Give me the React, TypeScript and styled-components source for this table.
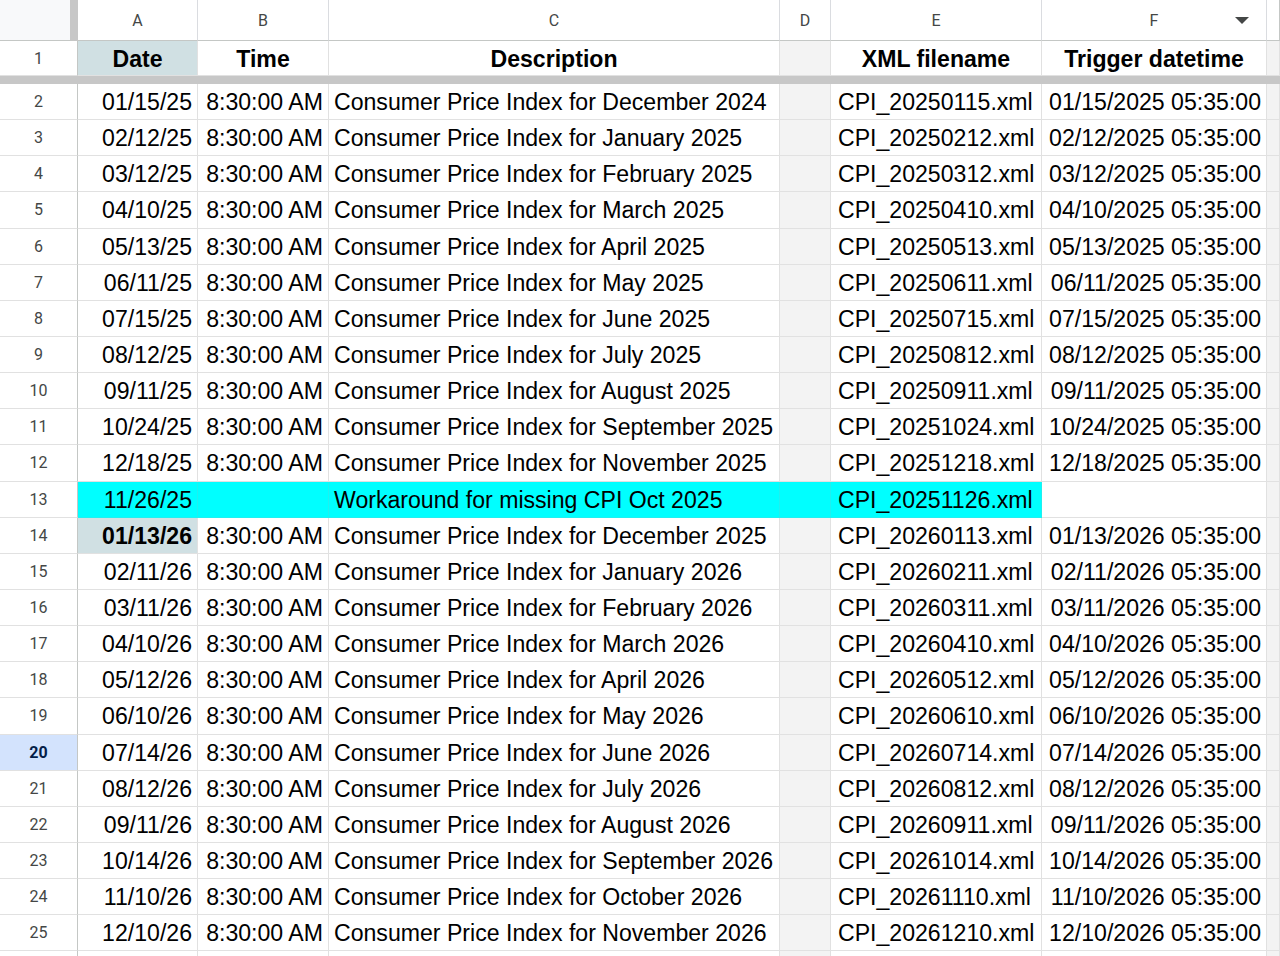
import React from "react";
import styled, { createGlobalStyle, css } from "styled-components";

const GlobalStyle = createGlobalStyle`
  html, body { margin: 0; padding: 0; background: #ffffff; }
  body { font-family: "Liberation Sans", Arial, sans-serif; overflow: hidden; }
  * { box-sizing: border-box; }
`;

const COLS = "78px 120px 131px 451px 51px 211px 225px 1fr";
const GRID = "#e1e1e1";
const HEAD_LINE = "#c4c7c5";

const Sheet = styled.div`
  width: 1280px;
  height: 956px;
  overflow: hidden;
  display: flex;
  flex-direction: column;
  background: #ffffff;
`;

const Row = styled.div<{ $h: number }>`
  display: grid;
  grid-template-columns: ${COLS};
  height: ${(p) => p.$h}px;
  flex: 0 0 auto;
`;

const FreezeBar = styled.div`
  height: 8px;
  flex: 0 0 auto;
  background: #c7c7c7;
`;

const Corner = styled.div`
  background: #f8f9fa;
  border-right: 8px solid #c7c7c7;
  border-bottom: 1px solid ${HEAD_LINE};
`;

const ColHead = styled.div<{ $last?: boolean }>`
  position: relative;
  display: flex;
  align-items: center;
  justify-content: center;
  background: #ffffff;
  border-right: 1px solid ${(p) => (p.$last ? HEAD_LINE : "#dadce0")};
  border-bottom: 1px solid ${HEAD_LINE};
  font-family: Roboto, "Liberation Sans", Arial, sans-serif;
  font-size: 16px;
  color: #444746;
  padding-top: 1px;
`;

const FilterArrow = styled.span`
  position: absolute;
  right: 17px;
  top: 17px;
  width: 0;
  height: 0;
  border-left: 7px solid transparent;
  border-right: 7px solid transparent;
  border-top: 7px solid #444746;
`;

const RowHead = styled.div<{ $selected?: boolean }>`
  display: flex;
  align-items: center;
  justify-content: center;
  font-family: Roboto, "Liberation Sans", Arial, sans-serif;
  font-size: 16px;
  color: #444746;
  background: #ffffff;
  border-right: 1px solid ${HEAD_LINE};
  border-bottom: 1px solid ${GRID};
  ${(p) =>
    p.$selected &&
    css`
      background: #d3e3fd;
      color: #041e49;
      font-weight: 700;
    `}
`;

type Align = "left" | "right" | "center";

const Cell = styled.div<{ $align?: Align; $bold?: boolean; $bg?: string; $line?: string; $padLeft?: number }>`
  display: flex;
  align-items: center;
  justify-content: ${(p) =>
    p.$align === "right" ? "flex-end" : p.$align === "center" ? "center" : "flex-start"};
  padding: 2px 5px 0 ${(p) => p.$padLeft ?? 5}px;
  overflow: hidden;
  white-space: nowrap;
  font-family: "Liberation Sans", Arial, sans-serif;
  font-size: 23.1px;
  font-weight: ${(p) => (p.$bold ? 700 : 400)};
  color: #000000;
  background: ${(p) => p.$bg || "#ffffff"};
  border-right: 1px solid ${(p) => p.$line || GRID};
  border-bottom: 1px solid ${(p) => p.$line || GRID};
`;

const GRAY = "#f3f3f3";
const KEY = "#d0e0e3";
const CYAN = "#00ffff";
const CYAN_LINE = "#1ff0f0";
const ROW_H = 36.15;

type Entry = { date: string; desc: string; xml: string; bold?: boolean; workaround?: boolean };

const entries: Entry[] = [
  { date: "01/15/25", desc: "Consumer Price Index for December 2024", xml: "CPI_20250115.xml" },
  { date: "02/12/25", desc: "Consumer Price Index for January 2025", xml: "CPI_20250212.xml" },
  { date: "03/12/25", desc: "Consumer Price Index for February 2025", xml: "CPI_20250312.xml" },
  { date: "04/10/25", desc: "Consumer Price Index for March 2025", xml: "CPI_20250410.xml" },
  { date: "05/13/25", desc: "Consumer Price Index for April 2025", xml: "CPI_20250513.xml" },
  { date: "06/11/25", desc: "Consumer Price Index for May 2025", xml: "CPI_20250611.xml" },
  { date: "07/15/25", desc: "Consumer Price Index for June 2025", xml: "CPI_20250715.xml" },
  { date: "08/12/25", desc: "Consumer Price Index for July 2025", xml: "CPI_20250812.xml" },
  { date: "09/11/25", desc: "Consumer Price Index for August 2025", xml: "CPI_20250911.xml" },
  { date: "10/24/25", desc: "Consumer Price Index for September 2025", xml: "CPI_20251024.xml" },
  { date: "12/18/25", desc: "Consumer Price Index for November 2025", xml: "CPI_20251218.xml" },
  { date: "11/26/25", desc: "Workaround for missing CPI Oct 2025", xml: "CPI_20251126.xml", workaround: true },
  { date: "01/13/26", desc: "Consumer Price Index for December 2025", xml: "CPI_20260113.xml", bold: true },
  { date: "02/11/26", desc: "Consumer Price Index for January 2026", xml: "CPI_20260211.xml" },
  { date: "03/11/26", desc: "Consumer Price Index for February 2026", xml: "CPI_20260311.xml" },
  { date: "04/10/26", desc: "Consumer Price Index for March 2026", xml: "CPI_20260410.xml" },
  { date: "05/12/26", desc: "Consumer Price Index for April 2026", xml: "CPI_20260512.xml" },
  { date: "06/10/26", desc: "Consumer Price Index for May 2026", xml: "CPI_20260610.xml" },
  { date: "07/14/26", desc: "Consumer Price Index for June 2026", xml: "CPI_20260714.xml" },
  { date: "08/12/26", desc: "Consumer Price Index for July 2026", xml: "CPI_20260812.xml" },
  { date: "09/11/26", desc: "Consumer Price Index for August 2026", xml: "CPI_20260911.xml" },
  { date: "10/14/26", desc: "Consumer Price Index for September 2026", xml: "CPI_20261014.xml" },
  { date: "11/10/26", desc: "Consumer Price Index for October 2026", xml: "CPI_20261110.xml" },
  { date: "12/10/26", desc: "Consumer Price Index for November 2026", xml: "CPI_20261210.xml" },
];

const trigger = (d: string) => {
  const [m, day, y] = d.split("/");
  return `${m}/${day}/20${y} 05:35:00`;
};

const letters = ["A", "B", "C", "D", "E", "F"];

export default function App() {
  return (
    <>
      <GlobalStyle />
      <Sheet>
        <Row $h={41}>
          <Corner />
          {letters.map((l) => (
            <ColHead key={l}>
              {l}
              {l === "F" && <FilterArrow />}
            </ColHead>
          ))}
          <ColHead $last />
        </Row>
        <Row $h={35}>
          <RowHead>1</RowHead>
          <Cell $align="center" $bold $bg={KEY}>Date</Cell>
          <Cell $align="center" $bold>Time</Cell>
          <Cell $align="center" $bold>Description</Cell>
          <Cell $bg={GRAY} />
          <Cell $align="center" $bold>XML filename</Cell>
          <Cell $align="center" $bold>Trigger datetime</Cell>
          <Cell $bg={GRAY} />
        </Row>
        <FreezeBar />
        {entries.map((e, i) => {
          const n = i + 2;
          if (e.workaround) {
            return (
              <Row $h={ROW_H} key={n}>
                <RowHead>{n}</RowHead>
                <Cell $align="right" $bg={CYAN} $line={CYAN_LINE}>{e.date}</Cell>
                <Cell $bg={CYAN} $line={CYAN_LINE} />
                <Cell $bg={CYAN} $line={CYAN_LINE}>{e.desc}</Cell>
                <Cell $bg={CYAN} $line={CYAN_LINE} />
                <Cell $bg={CYAN} $line={CYAN_LINE} $padLeft={7}>{e.xml}</Cell>
                <Cell />
                <Cell $bg={GRAY} />
              </Row>
            );
          }
          return (
            <Row $h={ROW_H} key={n}>
              <RowHead $selected={n === 20}>{n}</RowHead>
              <Cell $align="right" $bold={e.bold} $bg={e.bold ? KEY : undefined}>
                {e.date}
              </Cell>
              <Cell $align="right">8:30:00 AM</Cell>
              <Cell>{e.desc}</Cell>
              <Cell $bg={GRAY} />
              <Cell $padLeft={7}>{e.xml}</Cell>
              <Cell $align="right">{trigger(e.date)}</Cell>
              <Cell $bg={GRAY} />
            </Row>
          );
        })}
        <Row $h={ROW_H}>
          <RowHead />
          <Cell />
          <Cell />
          <Cell />
          <Cell $bg={GRAY} />
          <Cell />
          <Cell />
          <Cell $bg={GRAY} />
        </Row>
      </Sheet>
    </>
  );
}
